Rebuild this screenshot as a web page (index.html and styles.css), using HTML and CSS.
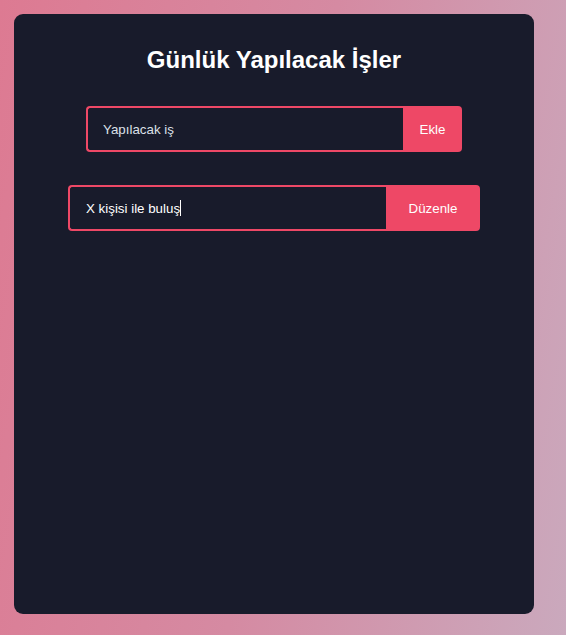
FILE: index.html
```html
<!DOCTYPE html>
<html lang="tr">
<head>
<meta charset="utf-8">
<title>Günlük Yapılacak İşler</title>
<link rel="stylesheet" href="styles.css">
</head>
<body>
  <main class="card">
    <h1 class="title">Günlük Yapılacak İşler</h1>
    <form class="todo-form">
      <input class="todo-input" type="text" placeholder="Yapılacak iş">
      <button class="todo-btn btn-add" type="button">Ekle</button>
    </form>
    <form class="todo-form edit-form">
      <input class="todo-input edit-input" type="text" value="X kişisi ile buluş" autofocus>
      <span class="caret" aria-hidden="true"></span>
      <button class="todo-btn btn-edit" type="button">Düzenle</button>
    </form>
  </main>
</body>
</html>
```

FILE: styles.css
```css
* { box-sizing: border-box; }
html, body { margin: 0; }
body {
  min-height: 100vh;
  padding: 14px;
  background: linear-gradient(100deg, #dd7a92 0%, #d58aa2 50%, #caa9bd 100%);
  font-family: "Liberation Sans", Arial, sans-serif;
}
.card {
  width: 520px;
  height: 600px;
  background: #181b2b;
  border-radius: 9px;
  padding: 32px 0 0;
  display: flex;
  flex-direction: column;
  align-items: center;
}
.title {
  margin: 0 0 32px;
  font-size: 24px;
  line-height: 28px;
  font-weight: 700;
  color: #ffffff;
  text-align: center;
}
.todo-form {
  display: flex;
  height: 46px;
  margin-bottom: 33px;
}
.edit-form { position: relative; }
.todo-input {
  width: 317px;
  height: 46px;
  background: transparent;
  border: 2px solid #ee4866;
  border-right: none;
  border-radius: 4px 0 0 4px;
  padding: 0 15px;
  font-family: "Liberation Sans", Arial, sans-serif;
  font-size: 13.333px;
  color: #ffffff;
  outline: none;
  caret-color: transparent;
}
.todo-input::placeholder { color: #dce0e8; opacity: 1; }
.edit-input { width: 318px; padding-left: 16px; }
.caret {
  position: absolute;
  left: 112px;
  top: 15px;
  width: 1px;
  height: 16px;
  background: #ffffff;
}
.todo-btn {
  height: 46px;
  border: none;
  background: #ee4866;
  color: #ffffff;
  font-family: "Liberation Sans", Arial, sans-serif;
  font-size: 13.333px;
  border-radius: 0 4px 4px 0;
  padding: 0;
  cursor: pointer;
}
.btn-add { width: 59px; }
.btn-edit { width: 94px; }
```
